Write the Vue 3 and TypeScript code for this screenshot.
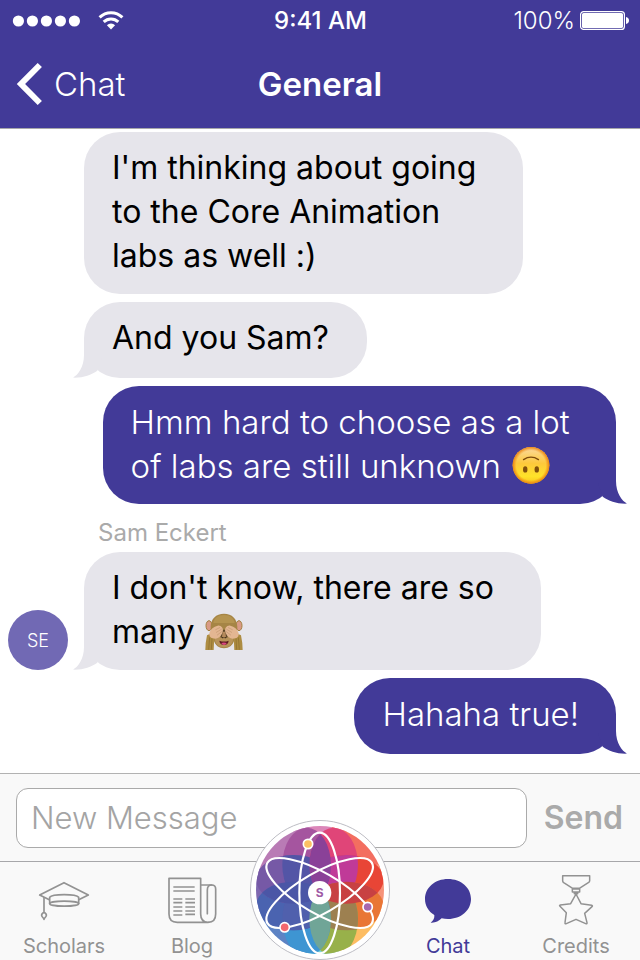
<script setup lang="ts">
import { ref } from 'vue'

type Emoji = 'upside-down' | 'monkey'

interface Line {
  text: string
  emoji?: Emoji
}

interface Message {
  id: number
  mine: boolean
  tail: boolean
  author?: string
  initials?: string
  lines: Line[]
}

const messages: Message[] = [
  {
    id: 1,
    mine: false,
    tail: false,
    lines: [
      { text: "I'm thinking about going " },
      { text: 'to the Core Animation ' },
      { text: 'labs as well :)' },
    ],
  },
  { id: 2, mine: false, tail: true, lines: [{ text: 'And you Sam?' }] },
  {
    id: 3,
    mine: true,
    tail: true,
    lines: [
      { text: 'Hmm hard to choose as a lot ' },
      { text: 'of labs are still unknown ', emoji: 'upside-down' },
    ],
  },
  {
    id: 4,
    mine: false,
    tail: true,
    author: 'Sam Eckert',
    initials: 'SE',
    lines: [
      { text: "I don't know, there are so " },
      { text: 'many ', emoji: 'monkey' },
    ],
  },
  { id: 5, mine: true, tail: true, lines: [{ text: 'Hahaha true!' }] },
]

interface Petal {
  id: string
  cx: number
  cy: number
  rx: number
  ry: number
  fill: string
}

interface Overlap {
  clip: string
  petal: Petal
  fill: string
}

// Petals run clockwise, two on each side of the disc.
const petals: Petal[] = [
  { id: 'a', cx: 200, cy: 162, rx: 73, ry: 112, fill: '#a5559f' },
  { id: 'b', cx: 281, cy: 162, rx: 73, ry: 112, fill: '#e04578' },
  { id: 'c', cx: 319, cy: 205, rx: 112, ry: 73, fill: '#e84536' },
  { id: 'd', cx: 319, cy: 285, rx: 112, ry: 73, fill: '#e97635' },
  { id: 'e', cx: 281, cy: 324, rx: 73, ry: 112, fill: '#98b14a' },
  { id: 'f', cx: 200, cy: 324, rx: 73, ry: 112, fill: '#3e95d2' },
  { id: 'g', cx: 160, cy: 285, rx: 112, ry: 73, fill: '#4a63b0' },
  { id: 'h', cx: 160, cy: 205, rx: 112, ry: 73, fill: '#7659a6' },
]

// Diagonal overlaps come first, the four central lenses lie over them.
const overlaps: Overlap[] = [
  { clip: 'b', petal: petals[2], fill: '#c03a98' },
  { clip: 'd', petal: petals[4], fill: '#9d8050' },
  { clip: 'f', petal: petals[6], fill: '#5060ad' },
  { clip: 'h', petal: petals[0], fill: '#5355a6' },
  { clip: 'g', petal: petals[7], fill: '#4b56a6' },
  { clip: 'c', petal: petals[3], fill: '#c84142' },
  { clip: 'a', petal: petals[1], fill: '#8a4198' },
  { clip: 'e', petal: petals[5], fill: '#70a597' },
]

const draft = ref('')
</script>

<template>
  <div class="app">
    <header class="header">
      <div class="status">
        <div class="signal">
          <svg width="68" height="12" viewBox="0 0 68 12" fill="#fff" aria-hidden="true">
            <circle v-for="n in 5" :key="n" :cx="14 * n - 7.6" cy="6" r="5.6" />
          </svg>
          <svg width="26" height="19" viewBox="0 0 26 19" fill="none" stroke="#fff" stroke-width="3" aria-hidden="true">
            <path d="M1.6 6.4a16.2 16.2 0 0 1 22.8 0" />
            <path d="M5.7 10.9a10.4 10.4 0 0 1 14.6 0" />
            <path d="M13 18.4l-4.1-4.2a5.8 5.8 0 0 1 8.2 0z" fill="#fff" stroke="none" />
          </svg>
        </div>
        <time class="clock">9:41 AM</time>
        <div class="power">
          <span>100%</span>
          <svg width="49" height="19" viewBox="0 0 49 19" aria-hidden="true">
            <rect x=".6" y=".6" width="43.8" height="17.8" rx="3" fill="none" stroke="#fff" stroke-width="1.2" />
            <rect x="2" y="2" width="41" height="15" rx="1.6" fill="#fff" />
            <path d="M46 6q3 .6 3 3.5t-3 3.5z" fill="#fff" />
          </svg>
        </div>
      </div>
      <nav class="navbar">
        <a class="back" href="#chat">
          <svg width="28" height="44" viewBox="0 0 28 44" fill="none" stroke="#fff" stroke-width="6" aria-hidden="true">
            <path d="M24.800 3L6 22l18.800 19" />
          </svg>
          <span>Chat</span>
        </a>
        <h1 class="title">General</h1>
      </nav>
    </header>

    <main class="messages">
      <article v-for="m in messages" :key="m.id" class="message" :class="{ mine: m.mine }">
        <div v-if="m.author" class="author">{{ m.author }}</div>
        <div class="row">
          <div v-if="!m.mine" class="gutter">
            <div v-if="m.initials" class="avatar">{{ m.initials }}</div>
          </div>
          <div class="bubble">
            <div v-for="(line, i) in m.lines" :key="i" class="line">
              <span>{{ line.text }}</span>
              <svg v-if="line.emoji === 'upside-down'" class="emoji" viewBox="-2 0 112 112" role="img" aria-label="Upside-down face">
                <defs>
                  <linearGradient id="face" x1="0" y1="0" x2="0" y2="1">
                    <stop offset="0" stop-color="#fbd9a0" />
                    <stop offset=".45" stop-color="#fdc93c" />
                    <stop offset=".8" stop-color="#ffe329" />
                    <stop offset="1" stop-color="#f9c41f" />
                  </linearGradient>
                  <radialGradient id="rim">
                    <stop offset=".8" stop-color="#f08a12" stop-opacity="0" />
                    <stop offset="1" stop-color="#ea8410" />
                  </radialGradient>
                </defs>
                <circle cx="54" cy="54" r="54" fill="url(#face)" />
                <circle cx="54" cy="54" r="54" fill="url(#rim)" />
                <path d="M32 37q22-14 44 0" fill="none" stroke="#7c4a0c" stroke-width="4" stroke-linecap="round" />
                <ellipse cx="37" cy="66" rx="6.5" ry="9.5" fill="#80500c" />
                <ellipse cx="71" cy="66" rx="6.5" ry="9.5" fill="#80500c" />
              </svg>
              <svg v-else-if="line.emoji === 'monkey'" class="emoji" viewBox="0 0 114 112" role="img" aria-label="See-no-evil monkey">
                <ellipse cx="12" cy="37" rx="9" ry="15" fill="#d99a86" stroke="#a3803f" stroke-width="3" />
                <ellipse cx="102" cy="37" rx="9" ry="15" fill="#d99a86" stroke="#a3803f" stroke-width="3" />
                <path d="M57 1C33 1 17 17 17 41c0 16 3 24 9 40 5 16 16 24 31 24s26-8 31-24c6-16 9-24 9-40C97 17 81 1 57 1z" fill="#a68545" />
                <path d="M57 5C39 5 27 14 25 29h64C87 14 75 5 57 5z" fill="#b59450" />
                <path d="M29 66q28-22 56 0 2 35-28 36-30-1-28-36z" fill="#b8935a" />
                <path d="M43 49h28l-4 24H47z" fill="#5e4728" />
                <path d="M53 55h8l2 17H51z" fill="#b58a5c" />
                <circle cx="53" cy="73" r="2" fill="#3d2818" />
                <circle cx="61" cy="73" r="2" fill="#3d2818" />
                <path d="M43 82q14 5 28 0-2 13-14 13T43 82z" fill="#5e1b22" />
                <path d="M49 89q8-3 16 0-2 6-8 6t-8-6z" fill="#d8487e" />
                <path d="M6 66q11-8 22 3l-2 41H1q0-21 5-44zM108 66q-11-8-22 3l2 41h25q0-21-5-44z" fill="#ad8c42" />
                <path d="M14 72l-3 37M100 72l3 37M21 75l-2 34M93 75l2 34" stroke="#8b6c2e" stroke-width="2" />
                <path d="M13 60c4-14 13-20 25-23 5-1 10 1 14 6 3 5 2 12-1 18-4 9-12 14-20 15-12 0-18-3-18-16z" fill="#e3b692" />
                <path d="M101 60c-4-14-13-20-25-23-5-1-10 1-14 6-3 5-2 12 1 18 4 9 12 14 20 15 12 0 18-3 18-16z" fill="#e3b692" />
                <path d="M32 49l12-6M34 57l15-9M37 65l13-10M82 49l-12-6M80 57l-15-9M77 65L64 55" stroke="#c39770" stroke-width="2" stroke-linecap="round" />
              </svg>
            </div>
            <svg v-if="m.tail" class="tail" width="40" height="40" viewBox="0 0 40 40" fill="currentColor" aria-hidden="true">
              <path d="M12 0v17C12 29 6 37 1 39.6 11 40 19 37 25.300 32.700L30 20z" />
            </svg>
          </div>
        </div>
      </article>
    </main>

    <form class="composer" @submit.prevent>
      <input v-model="draft" class="field" type="text" placeholder="New Message" aria-label="New Message" />
      <button class="send" type="submit">Send</button>
    </form>

    <nav class="tabs">
      <a class="tab" href="#scholars">
        <svg class="icon" viewBox="111 36 162 162" fill="none" stroke="#929292" stroke-width="5" stroke-linejoin="round" aria-hidden="true">
          <path d="M148 119l-29-14 73-37 73 37-29 14" />
          <path d="M149 132v-20c8-11 79-11 87 0v20" />
          <ellipse cx="192.500" cy="131" rx="43.500" ry="7.500" />
          <path d="M132 111v45M132 157c-5 3-8 6-7 10 1 5 6 6 7 11 1-5 6-6 7-11 1-4-2-7-7-10z" />
        </svg>
        <span>Scholars</span>
      </a>
      <a class="tab" href="#blog">
        <svg class="icon" viewBox="495 36 162 162" fill="none" stroke="#929292" stroke-width="5" stroke-linejoin="round" aria-hidden="true">
          <path d="M602 55h-95v107q0 25 25 25h92q-22-1-22-25z" />
          <path d="M602 75h33q12 0 12 12v75q0 25-23 25" />
          <path d="M622 161V90q0-15 13-15" stroke-linecap="round" />
          <path d="M520 81h64M520 93h64M520 117h27M520 128h27M520 141h27M520 153h27M520 165h27M556 117h29M556 128h29M556 141h29M556 153h29M556 163h29" />
        </svg>
        <span>Blog</span>
      </a>
      <a class="tab" href="#home" aria-label="Home">
        <svg class="logo" viewBox="30 27 420 420" aria-hidden="true">
          <defs>
            <clipPath id="disc"><circle cx="240" cy="237" r="192" /></clipPath>
            <clipPath v-for="p in petals" :id="'petal-' + p.id" :key="p.id">
              <ellipse :cx="p.cx" :cy="p.cy" :rx="p.rx" :ry="p.ry" />
            </clipPath>
          </defs>
          <circle cx="240" cy="237" r="208.500" fill="#fff" stroke="#bdbdc4" stroke-width="3" />
          <g clip-path="url(#disc)">
            <path d="M240 237L130 0H350z" fill="#db86b9" />
            <path d="M240 237L200 0H0V170z" fill="#b97bb5" />
            <path d="M240 237L285 0H480V170z" fill="#f36e60" />
            <path d="M240 237L480 130V350z" fill="#f6937a" />
            <path d="M240 237L480 320V480H290z" fill="#fdbd63" />
            <path d="M240 237L160 480H320z" fill="#7dd7d8" />
            <path d="M240 237L0 320V480H190z" fill="#5d83c4" />
            <path d="M240 237L0 150V330z" fill="#7f68b0" />
            <ellipse v-for="p in petals" :key="p.id" :cx="p.cx" :cy="p.cy" :rx="p.rx" :ry="p.ry" :fill="p.fill" />
            <g v-for="o in overlaps" :key="'over-' + o.clip" :clip-path="`url(#petal-${o.clip})`">
              <ellipse :cx="o.petal.cx" :cy="o.petal.cy" :rx="o.petal.rx" :ry="o.petal.ry" :fill="o.fill" />
            </g>
          </g>
          <g fill="none" stroke="#fff" stroke-width="6.500">
            <ellipse cx="239" cy="246" rx="61" ry="181" />
            <ellipse cx="239" cy="246" rx="61" ry="181" transform="rotate(60 239 246)" />
            <ellipse cx="239" cy="246" rx="61" ry="181" transform="rotate(-60 239 246)" />
          </g>
          <g stroke="#fff" stroke-width="5">
            <circle cx="204" cy="99" r="14" fill="#fcc062" />
            <circle cx="383" cy="288" r="14" fill="#a768ae" />
            <circle cx="134" cy="349" r="14" fill="#f4686e" />
          </g>
          <circle cx="239" cy="245" r="35" fill="#fff" />
          <text class="monogram" x="239" y="258" text-anchor="middle">S</text>
        </svg>
      </a>
      <a class="tab active" href="#chat" aria-current="page">
        <svg class="icon" viewBox="63 36 162 162" fill="#423a98" aria-hidden="true">
          <path d="M144 57c39 0 69 26 69 60s-30 60-69 60c-7 0-13-1-19-2-9 9-19 14-33 13 8-6 12-13 11-23-18-11-28-28-28-48 0-34 30-60 69-60z" />
        </svg>
        <span>Chat</span>
      </a>
      <a class="tab" href="#credits">
        <svg class="icon" viewBox="447 36 162 162" fill="none" stroke="#929292" stroke-width="4.500" stroke-linejoin="round" aria-hidden="true">
          <path d="M488 47h81v15q0 4-4 6l-27 17h-20l-27-17q-3-2-3-6z" />
          <path d="M517 87h22v9h-22zM523 97h10v4h-10z" />
          <path d="M528 102l15 29 32 5q4 1 1 4l-22 20 7 28q1 5-4 3l-29-13-29 13q-5 2-4-3l4-30-19-19q-3-3 1-4l31-4z" />
        </svg>
        <span>Credits</span>
      </a>
    </nav>
  </div>
</template>

<style>
body {
  margin: 0;
}
</style>

<style scoped>
.app {
  display: flex;
  flex-direction: column;
  min-height: 100vh;
  background: #fff;
  color: #000;
  font-family: Inter, 'Liberation Sans', sans-serif;
}

a {
  color: inherit;
  text-decoration: none;
}

.header {
  background: #423a98;
  color: #fff;
  border-bottom: 1px solid #a7a7aa;
}

.status {
  display: grid;
  grid-template-columns: 1fr auto 1fr;
  align-items: center;
  box-sizing: border-box;
  height: 40px;
  padding: 1px 11px 0 12px;
  font-size: 24px;
}

.signal {
  display: flex;
  align-items: center;
  gap: 18px;
}

.clock {
  font-weight: 500;
}

.power {
  display: flex;
  align-items: center;
  justify-content: flex-end;
  gap: 5px;
  font-weight: 300;
}

.navbar {
  display: grid;
  grid-template-columns: 1fr auto 1fr;
  align-items: center;
  height: 88px;
  padding: 0 15px;
  font-size: 33px;
}

.back {
  display: flex;
  align-items: center;
  gap: 11px;
  font-weight: 300;
}

.title {
  margin: 0;
  font-size: 33px;
  font-weight: 600;
}

.messages {
  display: flex;
  flex: 1;
  flex-direction: column;
  justify-content: flex-end;
  gap: 8px;
  padding: 0 24px 19px 8px;
}

.author {
  padding: 9px 0 7px 90px;
  color: #aaa;
  font-size: 24px;
  line-height: 24px;
}

.row {
  display: flex;
  align-items: flex-end;
}

.mine .row {
  justify-content: flex-end;
}

.gutter {
  flex: none;
  width: 76px;
}

.avatar {
  display: grid;
  place-items: center;
  width: 60px;
  height: 60px;
  border-radius: 50%;
  background: #7169b4;
  color: #fff;
  font-size: 18px;
  font-weight: 300;
}

.bubble {
  position: relative;
  box-sizing: border-box;
  min-height: 76px;
  padding: 14px 38px 16px 28px;
  border-radius: 36px;
  background: #e6e5eb;
  font-size: 32px;
  line-height: 44px;
}

.mine .bubble {
  padding-right: 37px;
  background: #423a98;
  color: #fff;
  font-size: 33px;
  font-weight: 300;
}

.line {
  display: flex;
  align-items: center;
  height: 44px;
  white-space: pre;
}

.emoji {
  width: 38px;
  height: 38px;
  margin-left: 2px;
}

.tail {
  position: absolute;
  bottom: 0;
  left: -12px;
  color: #e6e5eb;
}

.mine .tail {
  right: -12px;
  left: auto;
  color: #423a98;
  transform: scaleX(-1);
}

.composer {
  display: flex;
  align-items: center;
  gap: 17px;
  height: 87px;
  padding: 0 17px 0 16px;
  border-top: 1px solid #b2b2b2;
  background: #f9f9f9;
}

.field {
  box-sizing: border-box;
  flex: 1;
  min-width: 0;
  height: 60px;
  padding: 0 14px;
  border: 1px solid #aaa;
  border-radius: 12px;
  background: #fff;
  color: #000;
  font: inherit;
  font-size: 31px;
  outline: none;
}

.field::placeholder {
  color: #a4a4a4;
  font-weight: 300;
  opacity: 1;
}

.send {
  padding: 0;
  border: 0;
  background: none;
  color: #aaa;
  font: inherit;
  font-size: 32px;
  font-weight: 600;
}

.tabs {
  display: grid;
  grid-template-columns: repeat(5, 1fr);
  height: 98px;
  border-top: 1px solid #a7a7aa;
  background: #f9f9f9;
}

.tab {
  position: relative;
  display: flex;
  flex-direction: column;
  align-items: center;
  gap: 8px;
  padding-top: 10px;
  color: #929292;
  font-size: 20px;
  line-height: 24px;
}

.active {
  color: #423a98;
}

.icon {
  width: 54px;
  height: 54px;
}

.logo {
  position: absolute;
  bottom: 0;
  width: 140px;
  height: 140px;
}

.monogram {
  fill: #a05aa5;
  font-size: 36px;
  font-weight: 700;
}
</style>
